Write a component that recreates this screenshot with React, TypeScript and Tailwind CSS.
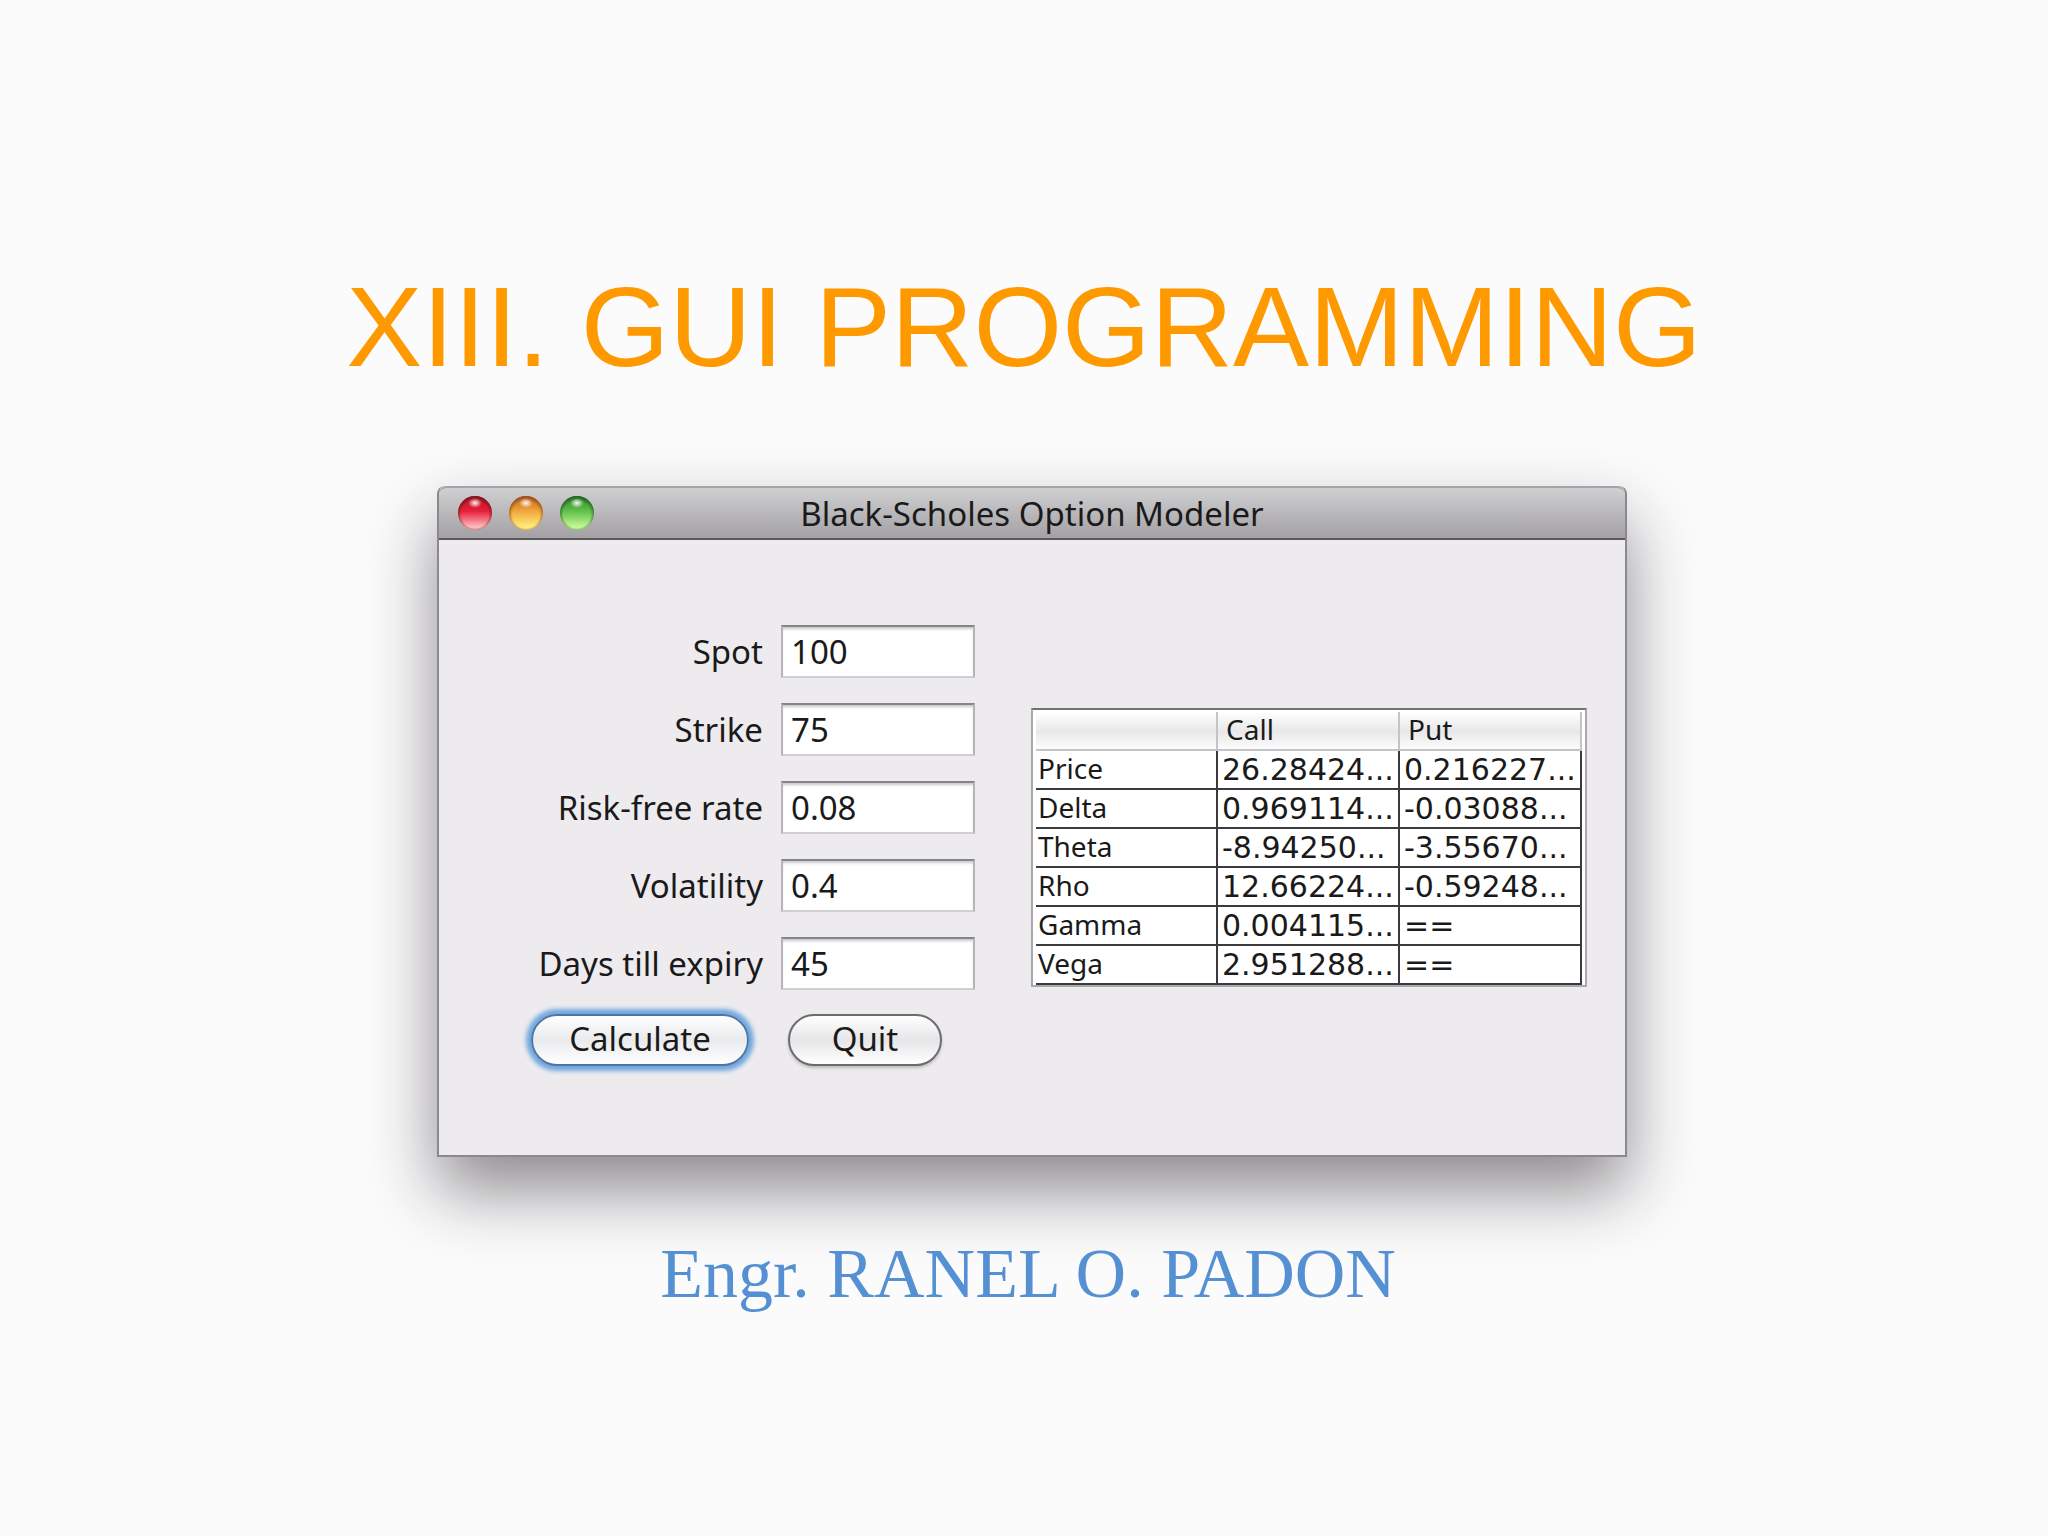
const fields = [
  { id: 'spot', label: 'Spot', value: '100' },
  { id: 'strike', label: 'Strike', value: '75' },
  { id: 'rate', label: 'Risk-free rate', value: '0.08' },
  { id: 'volatility', label: 'Volatility', value: '0.4' },
  { id: 'days', label: 'Days till expiry', value: '45' },
]

const rows = [
  { name: 'Price', call: '26.28424...', put: '0.216227...' },
  { name: 'Delta', call: '0.969114...', put: '-0.03088...' },
  { name: 'Theta', call: '-8.94250...', put: '-3.55670...' },
  { name: 'Rho', call: '12.66224...', put: '-0.59248...' },
  { name: 'Gamma', call: '0.004115...', put: '==' },
  { name: 'Vega', call: '2.951288...', put: '==' },
]

const lights = [
  { id: 'close', name: 'Close', rim: '#6b1820', top: '#b3121f', mid: '#e8203a', low: '#ffb8bd' },
  { id: 'minimize', name: 'Minimize', rim: '#8a4a1c', top: '#c4601a', mid: '#f0a83c', low: '#ffec7a' },
  { id: 'zoom', name: 'Zoom', rim: '#23581f', top: '#2b8528', mid: '#62c04c', low: '#c2f892' },
]

function Light({ light }: { light: typeof lights[0] }) {
  return (
    <button type="button" aria-label={light.name} className="size-[34px]">
      <svg viewBox="0 0 34 34" className="block size-full">
        <defs>
          <linearGradient id={light.id} x1="0" y1="0" x2="0" y2="1">
            <stop offset="0" stopColor={light.top} />
            <stop offset="0.45" stopColor={light.mid} />
            <stop offset="0.9" stopColor={light.low} />
          </linearGradient>
          <radialGradient id={light.id + '-edge'} cx="0.5" cy="0.54" r="0.54">
            <stop offset="0.74" stopColor={light.rim} stopOpacity="0" />
            <stop offset="1" stopColor={light.rim} stopOpacity="0.85" />
          </radialGradient>
          <radialGradient id={light.id + '-shine'}>
            <stop offset="0" stopColor="#fff" stopOpacity="0.95" />
            <stop offset="1" stopColor="#fff" stopOpacity="0" />
          </radialGradient>
        </defs>
        <circle cx="17" cy="17" r="17" fill={`url(#${light.id})`} />
        <circle cx="17" cy="17" r="17" fill={`url(#${light.id}-edge)`} />
        <ellipse cx="17" cy="7" rx="7" ry="5" fill={`url(#${light.id}-shine)`} />
      </svg>
    </button>
  )
}

function TitleBar() {
  return (
    <div className="grid h-[54px] grid-cols-[1fr_auto_1fr] items-center rounded-t-lg border-t-2 border-b-2 border-t-[#a5a4a6] border-b-[#5b595c] bg-linear-to-b from-[#d0cfd1] to-[#a3a1a4] px-[19px]">
      <div className="flex gap-[17px]">
        {lights.map(l => (
          <Light key={l.id} light={l} />
        ))}
      </div>
      <h2 className="text-[33px] leading-none whitespace-nowrap text-[#1a1a1a]">Black-Scholes Option Modeler</h2>
    </div>
  )
}

function ParameterForm() {
  return (
    <form onSubmit={e => e.preventDefault()}>
      <div className="grid grid-cols-[232px_194px] items-center gap-x-[18px] gap-y-[25px]">
        {fields.map(f => (
          <div key={f.id} className="contents">
            <label htmlFor={f.id} className="text-right text-[33px] leading-none whitespace-nowrap">
              {f.label}
            </label>
            <input
              id={f.id}
              defaultValue={f.value}
              className="h-[53px] w-full border-2 border-x-[#b5b4b6] border-t-[#858487] border-b-[#cfced0] bg-white px-2 text-[33px] leading-none shadow-[inset_0_3px_3px_-1px_#c8c8ca] outline-none"
            />
          </div>
        ))}
      </div>
      <div className="mt-6 flex gap-[39px]">
        <button
          type="submit"
          className="h-[52px] w-[218px] rounded-full border-2 border-[#4a76a8] bg-linear-to-b from-white via-[#e9eaec] to-white pb-1 text-[33px] leading-none shadow-[0_0_4px_5px_#72a8de]"
        >
          Calculate
        </button>
        <button
          type="button"
          className="h-[52px] w-[154px] rounded-full border-2 border-[#6d6b6f] bg-linear-to-b from-white via-[#e6e6e8] to-white pb-1 text-[33px] leading-none shadow-[0_2px_3px_#bdbcbf]"
        >
          Quit
        </button>
      </div>
    </form>
  )
}

function ResultsTable() {
  return (
    <div className="mt-[83px] w-[556px] border-2 border-[#a9a8ab] border-t-[#737275] bg-white px-[3px] pt-0.5">
      <table className="w-full table-fixed border-separate border-spacing-0 text-left text-[28px] leading-none">
        <thead>
          <tr className="h-[39px] bg-linear-to-b from-white via-[#e8e7e9] to-white">
            <th className="w-[182px] border-r-2 border-b-2 border-[#c4c3c5]" aria-label="Measure" />
            <th className="border-r-2 border-b-2 border-[#c4c3c5] px-2 pb-1 font-normal">Call</th>
            <th className="border-r-2 border-b-2 border-[#c4c3c5] px-2 pb-1 font-normal">Put</th>
          </tr>
        </thead>
        <tbody>
          {rows.map(r => (
            <tr key={r.name} className="h-[39px]">
              <th className="border-r-2 border-b-2 border-[#3c3a3e] px-0.5 pb-1 font-normal">{r.name}</th>
              <td className="border-r-2 border-b-2 border-[#3c3a3e] px-1 font-['DejaVu_Sans',sans-serif] text-[30px] leading-none whitespace-nowrap">{r.call}</td>
              <td className="border-r-2 border-b-2 border-[#3c3a3e] px-1 font-['DejaVu_Sans',sans-serif] text-[30px] leading-none whitespace-nowrap">{r.put}</td>
            </tr>
          ))}
        </tbody>
      </table>
    </div>
  )
}

export default function App() {
  return (
    <main className="flex min-h-screen flex-col items-center bg-[#fcfbfc] pt-[270px]">
      <h1 className="font-['Liberation_Sans',Arial,sans-serif] text-[114px] leading-none whitespace-nowrap text-[#ff9900]">
        XIII. GUI PROGRAMMING
      </h1>

      <div className="mt-[102px] flex w-full justify-center pl-4">
        <section className="w-full max-w-[1190px] rounded-t-lg border-x-2 border-b-2 border-[#8a898c] bg-[#edebee] font-['Noto_Sans',sans-serif] text-[#1a1a1a] shadow-[0_34px_68px_rgba(20,16,24,0.48)]">
          <TitleBar />
          <div className="flex items-start justify-between pt-[85px] pr-[38px] pb-[89px] pl-[92px]">
            <ParameterForm />
            <ResultsTable />
          </div>
        </section>
      </div>

      <p className="mt-[82px] pl-2 font-[Harrington,'Liberation_Serif',serif] text-[70px] leading-none whitespace-nowrap text-[#5590d3]">
        Engr. RANEL O. PADON
      </p>
    </main>
  )
}
